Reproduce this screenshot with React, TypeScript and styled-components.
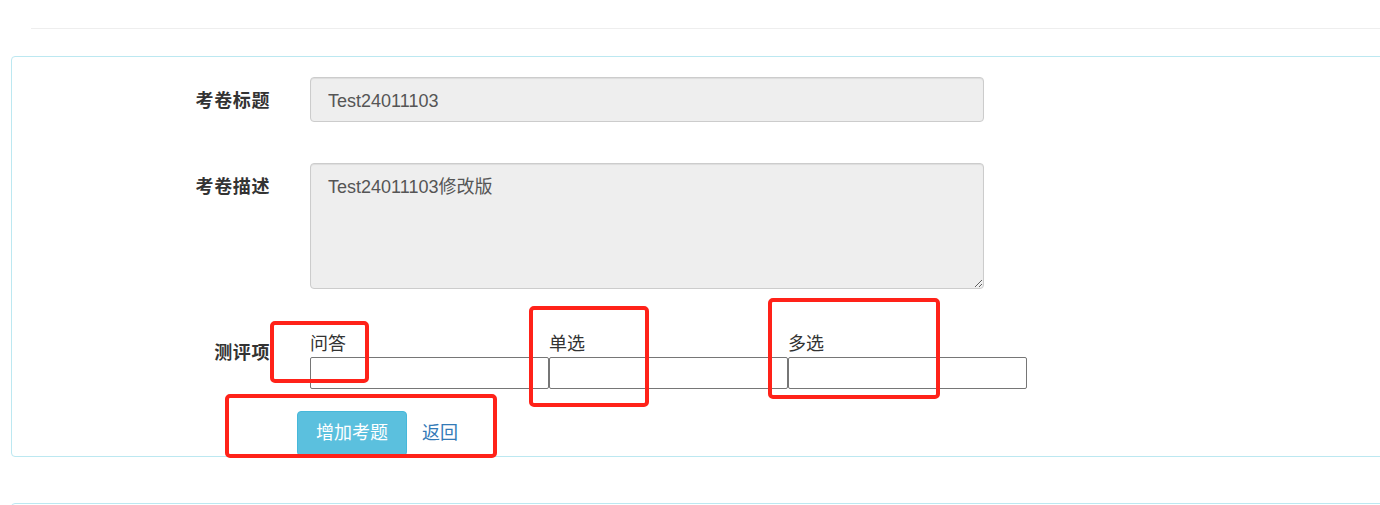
import React, { ReactElement } from 'react'
import styled, { createGlobalStyle } from 'styled-components'

const GlobalStyle = createGlobalStyle`
  html, body {
    margin: 0;
    padding: 0;
    background: #fff;
    overflow: hidden;
  }
  body {
    font-family: 'Liberation Sans', Helvetica, Arial, 'Noto Sans CJK SC', sans-serif;
    font-size: 18px;
    line-height: 1.42857;
    color: #333;
  }
  * {
    box-sizing: border-box;
  }
`

const Page = styled.div`
  position: relative;
  width: 1380px;
  height: 505px;
  padding-top: 28px;
`

const TopRule = styled.hr`
  margin: 0 0 0 31px;
  border: 0;
  border-top: 1px solid #eee;
`

const Panel = styled.div<{ $top: number }>`
  margin: ${p => p.$top}px -20px 0 11px;
  border: 1px solid #bce8f1;
  border-radius: 4px;
  padding-top: 20px;
`

const FormRow = styled.div<{ $gap: number }>`
  display: flex;
  align-items: flex-start;
  margin-bottom: ${p => p.$gap}px;
`

const Label = styled.label<{ $pad: number }>`
  width: 258px;
  margin-right: 40px;
  padding-top: ${p => p.$pad}px;
  text-align: right;
  font-weight: bold;
  letter-spacing: 0.6px;
  color: #333;
  flex-shrink: 0;
`

const TextInput = styled.input`
  width: 674px;
  height: 45px;
  padding: 11px 17px 7px;
  font: inherit;
  color: #555;
  background: #eee;
  border: 1px solid #ccc;
  border-radius: 4px;
  box-shadow: inset 0 1px 1px rgba(0, 0, 0, 0.075);
  outline: none;
`

const TextArea = styled.textarea`
  width: 674px;
  height: 126px;
  padding: 11px 17px;
  font: inherit;
  line-height: 1.42857;
  color: #555;
  background: #eee;
  border: 1px solid #ccc;
  border-radius: 4px;
  box-shadow: inset 0 1px 1px rgba(0, 0, 0, 0.075);
  resize: vertical;
  outline: none;
`

const ItemGroup = styled.div`
  display: flex;
`

const Item = styled.div`
  display: flex;
  flex-direction: column;
  width: 239px;
`

const ItemLabel = styled.span`
  line-height: 25px;
  color: #333;
`

const ItemInput = styled.input`
  width: 239px;
  height: 32px;
  margin: 0;
  padding: 1px 2px;
  font: inherit;
  border: 1px solid #767676;
  border-radius: 2px;
  background: #fff;
  outline: none;
`

const Actions = styled.div`
  display: flex;
  align-items: center;
  margin-left: 285px;
  padding-top: 22px;
`

const InfoButton = styled.button`
  height: 45px;
  padding: 0 18px;
  font: inherit;
  color: #fff;
  background: #5bc0de;
  border: 1px solid #46b8da;
  border-radius: 4px;
  cursor: pointer;
`

const BackLink = styled.a`
  margin-left: 15px;
  color: #337ab7;
  text-decoration: none;
`

const Mark = styled.div<{ $x: number; $y: number; $w: number; $h: number }>`
  position: absolute;
  left: ${p => p.$x}px;
  top: ${p => p.$y}px;
  width: ${p => p.$w}px;
  height: ${p => p.$h}px;
  border: 4.5px solid #ff2219;
  border-radius: 5px;
  pointer-events: none;
`

const items = ['问答', '单选', '多选']

const marks = [
  { x: 270, y: 321, w: 99, h: 62 },
  { x: 529, y: 306, w: 120, h: 101 },
  { x: 768, y: 298, w: 172, h: 101 },
  { x: 225, y: 394, w: 272, h: 64 },
]

const App = (): ReactElement => {
  return (
    <Page>
      <GlobalStyle />
      <TopRule />
      <Panel $top={27}>
        <FormRow $gap={41}>
          <Label $pad={12}>考卷标题</Label>
          <TextInput readOnly value='Test24011103' />
        </FormRow>
        <FormRow $gap={43}>
          <Label $pad={12}>考卷描述</Label>
          <TextArea readOnly value='Test24011103修改版' />
        </FormRow>
        <FormRow $gap={0}>
          <Label $pad={9}>测评项</Label>
          <ItemGroup>
            {items.map(name => (
              <Item key={name}>
                <ItemLabel>{name}</ItemLabel>
                <ItemInput type='text' />
              </Item>
            ))}
          </ItemGroup>
        </FormRow>
        <Actions>
          <InfoButton type='button'>增加考题</InfoButton>
          <BackLink href='#'>返回</BackLink>
        </Actions>
      </Panel>
      <Panel $top={46} />
      {marks.map((m, i) => (
        <Mark key={i} $x={m.x} $y={m.y} $w={m.w} $h={m.h} />
      ))}
    </Page>
  )
}

export default App
